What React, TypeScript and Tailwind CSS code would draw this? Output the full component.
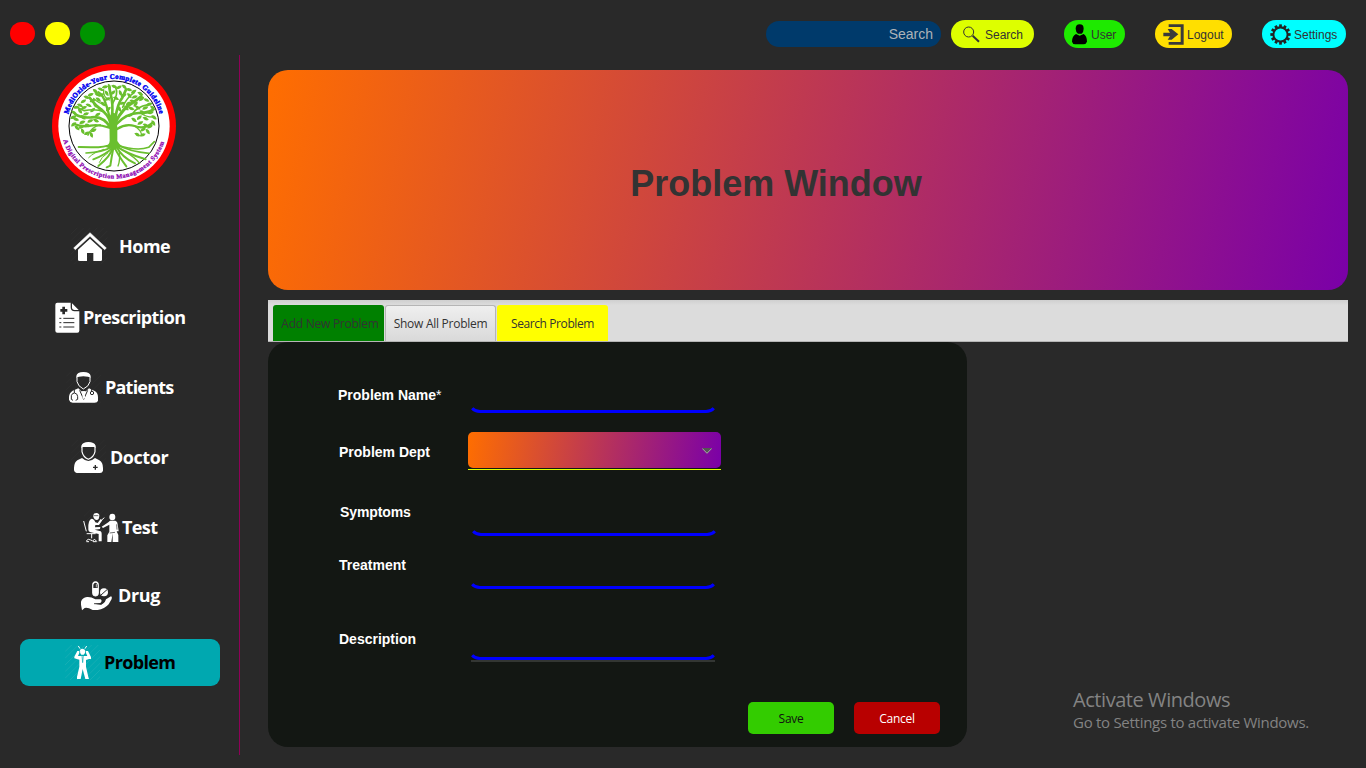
import React from "react";

const HATCH = "M0 20L20 0M0 40L40 0M0 60L60 0M0 80L80 0M0 100L100 0M10 110L110 10M30 110L110 30M50 110L110 50M70 110L110 70M90 110L110 90";

function Hatch({ x, y, color }: { x: number; y: number; color: string }) {
  return <path d={HATCH} transform={`translate(${x} ${y})`} stroke={color} strokeWidth="2" fill="none" />;
}

function HomeIcon() {
  return (
    <svg width="40" height="40" viewBox="90 18 120 120" className="shrink-0">
      <Hatch x={92} y={20} color="#323232" />
      <path d="M150 35L101 81L106 86L150 46L194 86L199 81Z" fill="#fff" stroke="#fff" strokeWidth="1.5" />
      <path d="M150 53L114 86V116Q114 120 119 120H141V96H160V120H182Q186 120 186 116V86Z" fill="#fff" />
    </svg>
  );
}

function PrescriptionIcon() {
  return (
    <svg width="25" height="31" viewBox="44 244 75 93" className="shrink-0">
      <path d="M51 246H91V260Q91 272 103 272H117V330Q117 336 111 336H51Q45 336 45 330V252Q45 246 51 246Z" fill="#fff" />
      <path d="M95 248L115 268H103Q95 268 95 260Z" fill="#fff" />
      <path d="M66 258H74V265H81V273H74V281H66V273H60V265H66Z" fill="#292929" />
      <path d="M57 293H63M69 293H102M57 306H63M69 306H102M57 319H63M69 319H102" stroke="#292929" strokeWidth="3" />
    </svg>
  );
}

function PatientsIcon() {
  return (
    <svg width="35" height="35" viewBox="78 450 105 105" className="shrink-0">
      <Hatch x={78} y={450} color="#303030" />
      <path d="M109 474V468Q111 456 130 456Q150 456 152 468V474Q147 469 130 469Q114 469 109 474Z" fill="#fff" />
      <path d="M111 472V485Q114 499 130 507Q147 499 150 485V472" fill="none" stroke="#fff" strokeWidth="3" />
      <path d="M115 505L124 514H138L147 505L164 513Q174 518 174 532V542Q172 548 164 548H98Q89 547 87 539V530Q88 518 98 512Z" fill="#fff" />
      <path d="M119 511L131 538L143 511" fill="none" stroke="#292929" strokeWidth="3" />
      <path d="M126 514H136L133 522L136 532L131 538L127 532L129 522Z" fill="#fff" />
      <path d="M103 510V519M94 538V527Q96 519 104 519Q113 521 113 530V538L107 541M94 538L99 541M155 507V516" fill="none" stroke="#292929" strokeWidth="3" />
      <circle cx="156" cy="519" r="5" fill="none" stroke="#292929" strokeWidth="3" />
    </svg>
  );
}

function DoctorIcon() {
  return (
    <svg width="35" height="35" viewBox="93 30 105 105" className="shrink-0">
      <Hatch x={93} y={30} color="#303030" />
      <path d="M124 54V47Q128 36 145 36Q163 36 167 47V54L163 51H128Z" fill="#fff" />
      <path d="M126 50V65Q129 81 145 88Q162 81 165 65V50" fill="none" stroke="#fff" strokeWidth="3.5" />
      <path d="M126 84Q145 102 165 84L178 91Q189 98 189 114V122Q187 129 180 129H110Q103 128 102 121V113Q103 97 112 91Z" fill="#fff" />
      <path d="M166 105V119M159 112H173" stroke="#292929" strokeWidth="4" />
    </svg>
  );
}

function TestIcon() {
  return (
    <svg width="36" height="35" viewBox="128 240 108 105" className="shrink-0">
      <Hatch x={130} y={240} color="#303030" />
      <path d="M159 255Q160 249 168 249Q178 250 177 258L175 267Q170 272 163 268L159 261Z" fill="#fff" />
      <path d="M160 257H174" stroke="#292929" strokeWidth="2" />
      <path d="M154 266Q161 266 165 277L172 279L181 267L186 271L176 285L165 285L164 292L180 291L179 297L163 299L181 304Q184 306 184 311V334H175V312L151 307Q143 305 144 295Q143 270 154 266Z" fill="#fff" />
      <path d="M183 271L192 263M130 273L138 304M139 311H166M154 312V325M138 332Q144 325 151 330Q157 336 163 328L169 334M138 335H146M158 335H169" fill="none" stroke="#fff" strokeWidth="3" />
      <ellipse cx="216" cy="261" rx="9" ry="10" fill="#fff" />
      <path d="M209 272H225Q232 274 232 283L235 304H229L234 315V336H217V310L213 336H201V316L207 305V284L188 294L184 290L204 277Z" fill="#fff" />
      <path d="M229 283L230 299M208 309L224 307" stroke="#292929" strokeWidth="2" />
    </svg>
  );
}

function DrugIcon() {
  return (
    <svg width="33" height="32" viewBox="120 449 99 96" className="shrink-0">
      <rect x="158" y="454" width="17" height="43" rx="8" fill="#fff" stroke="#fff" strokeWidth="3" />
      <path d="M160 463Q162 457 167 457Q172 458 173 464V473H160Z" fill="#292929" />
      <path d="M169 461V471" stroke="#fff" strokeWidth="2" />
      <circle cx="192" cy="486" r="12" fill="#fff" />
      <path d="M183 494L201 478" stroke="#292929" strokeWidth="3" />
      <path d="M123 523V514Q127 502 141 500Q153 499 166 507H182Q188 512 181 518L163 520L183 523Q194 520 198 507L213 498Q217 498 215 506L206 522Q194 536 173 539H158Q142 530 134 533L126 540Z" fill="#fff" />
      <path d="M162 520L184 521L195 512" fill="none" stroke="#292929" strokeWidth="2.5" />
    </svg>
  );
}

function ProblemIcon() {
  return (
    <svg width="35" height="35" viewBox="195 75 105 105" className="shrink-0">
      <Hatch x={195} y={75} color="#1fb0b6" />
      <path d="M235 78L240 86M260 78L255 86" stroke="#fff" strokeWidth="3" />
      <path d="M240 90Q243 86 248 86Q255 87 256 93Q256 102 251 104H244Q239 101 240 90Z" fill="#fff" />
      <path d="M232 93H238V99L234 108H262L258 99V93H264L273 111V117H267L258 120V140L265 171L267 177H256L248 147L242 177H231V171L238 140V119L223 115V110Z" fill="#fff" />
      <path d="M246 108L248 128L250 108" fill="none" stroke="#00a8b0" strokeWidth="2" />
    </svg>
  );
}

const BRANCHES: [string, number][] = [
  ["M212 215Q210 188 190 170Q165 152 148 128", 8],
  ["M212 205Q203 165 196 145Q188 120 174 112", 7],
  ["M215 185Q219 145 211 118L207 99", 8],
  ["M225 190Q232 145 246 128L257 104", 8],
  ["M226 200Q248 158 283 139L303 124", 9],
  ["M227 208Q260 174 295 174Q322 174 337 165", 8],
  ["M212 220Q190 181 153 187Q125 190 105 178", 8],
  ["M207 218Q174 207 151 212Q126 217 101 207", 7],
  ["M230 222Q256 205 283 213Q312 225 338 202", 7],
  ["M192 171Q166 160 132 167L110 157", 5],
  ["M198 150Q173 145 160 130", 4],
  ["M217 145Q235 116 226 98", 5],
  ["M247 157Q258 128 282 113", 5],
  ["M278 175Q289 156 323 149", 5],
  ["M180 209Q150 218 143 241", 4],
  ["M282 213Q302 225 304 240", 4],
  ["M207 135Q187 126 190 104", 4],
  ["M300 174Q318 187 339 186", 4],
];

const LEAVES: [number, number, number][] = [
  [181, 103, 20], [194, 96, -15], [207, 95, 65], [222, 95, 15], [236, 97, -35], [252, 96, 40], [266, 104, 10], [280, 110, -35],
  [165, 109, 40], [151, 119, -25], [139, 127, 15], [129, 139, -35], [119, 151, 20], [108, 157, -10], [101, 173, 30], [99, 187, -25],
  [107, 193, 15], [100, 208, -40], [110, 219, 40], [124, 216, -25], [127, 229, 60], [140, 235, -30], [153, 239, 65], [160, 226, -30],
  [142, 211, 25], [126, 202, -25], [128, 187, 40], [137, 177, -20], [119, 168, 50], [131, 158, -25], [145, 151, 20], [157, 165, -45],
  [164, 150, 55], [157, 137, -25], [174, 134, 35], [183, 120, -30], [172, 119, 15], [199, 115, 55], [202, 132, -25], [188, 147, 40],
  [218, 113, -45], [227, 130, 20], [240, 114, 65], [250, 121, -30], [267, 122, 45], [283, 126, -20], [300, 116, 25], [304, 132, -40],
  [318, 135, 20], [327, 148, -25], [337, 159, 40], [331, 173, -15], [341, 187, 35], [339, 204, 55], [329, 215, -35], [316, 211, 25],
  [308, 224, -35], [322, 230, 50], [307, 240, -20], [291, 239, 25], [300, 204, -30], [316, 191, 20], [297, 188, -45], [306, 172, 35],
  [315, 159, -25], [292, 158, 30], [286, 148, -55], [277, 139, 20], [264, 146, -40], [258, 159, 45], [246, 145, -15], [237, 162, 60],
  [204, 162, -45], [181, 163, 20], [172, 179, -35], [167, 197, 20], [150, 198, -25], [273, 161, 15], [281, 195, 35], [269, 181, -20],
];

const ROOTS: [string, number][] = [
  ["M215 268Q190 278 151 277L115 276", 6],
  ["M218 274Q187 293 137 294", 5],
  ["M218 277Q196 299 159 313", 6],
  ["M218 277Q211 304 174 333", 6],
  ["M219 279Q214 304 210 332L199 337", 6],
  ["M223 278Q235 304 258 334", 6],
  ["M227 273Q245 308 284 325", 6],
  ["M226 272Q260 297 316 313", 6],
  ["M227 268Q270 291 326 295", 5],
  ["M230 270Q290 290 325 277L342 260", 5],
  ["M190 283Q160 292 145 308", 3],
  ["M202 294Q182 306 177 322", 3],
  ["M237 290Q240 316 233 333", 4],
  ["M255 290Q283 307 298 325", 4],
];

function Logo() {
  return (
    <svg width="124" height="124" viewBox="35 27 372 372">
      <defs>
        <path id="arc-top" d="M84 178A141.4 141.4 0 0 1 358 178" />
        <path id="arc-bottom" d="M69 256A158 158 0 0 0 373 256" />
      </defs>
      <circle cx="221" cy="213" r="186" fill="#f00" />
      <circle cx="221" cy="213" r="167" fill="#fff" />
      <circle cx="221" cy="213" r="135" fill="none" stroke="#000" strokeWidth="3" />
      <g stroke="#6abf2e" fill="none" strokeLinecap="round" strokeLinejoin="round">
        {BRANCHES.map(([d, w], i) => <path key={i} d={d} strokeWidth={w} />)}
        {ROOTS.map(([d, w], i) => <path key={i} d={d} strokeWidth={w} />)}
      </g>
      <path d="M207 185Q214 172 220 173Q229 176 233 190Q229 205 231 225V258Q237 268 244 273L221 285L196 276Q207 269 208 257Z" fill="#6abf2e" />
      {LEAVES.map(([x, y, a], i) => (
        <path key={i} d="M-10 0Q-2 -10 10 0Q2 9 -10 0Z" fill="#6abf2e" transform={`translate(${x} ${y}) rotate(${a})`} />
      ))}
      <text fill="#0000f0" fontSize="21" fontWeight="700" fontFamily="Liberation Serif, serif" stroke="#0000f0" strokeWidth="1.4">
        <textPath href="#arc-top" textLength="372" lengthAdjust="spacing">MediOxide-Your Complete Guideline</textPath>
      </text>
      <text fill="#8c00b0" fontSize="19" fontWeight="700" fontFamily="Liberation Serif, serif" stroke="#8c00b0" strokeWidth="0.8">
        <textPath href="#arc-bottom" textLength="402" lengthAdjust="spacing">A Digital Prescription Management System</textPath>
      </text>
    </svg>
  );
}

function SearchIcon() {
  return (
    <svg width="18" height="17" viewBox="638 62 54 51" fill="none" stroke="#333">
      <circle cx="655" cy="80" r="15" strokeWidth="3" />
      <path d="M667 91L686 109" strokeWidth="6" />
    </svg>
  );
}

function UserIcon() {
  return (
    <svg width="16" height="21" viewBox="66 56 48 63" fill="#000">
      <path d="M77 70Q77 57 89 57Q101 57 101 70Q101 79 95 85H84Q77 79 77 70Z" />
      <path d="M78 86L89 91L101 86Q111 93 111 109Q108 117 100 117H76Q68 117 66 109Q66 92 78 86Z" />
    </svg>
  );
}

function LogoutIcon() {
  return (
    <svg width="21" height="21" viewBox="338 56 63 63">
      <path d="M355 57H400V118H355V110H391V65H355Z" fill="#3a3a3a" />
      <path d="M339 82H359L352 71H364L384 87L364 103H352L359 93H339Z" fill="#3a3a3a" />
    </svg>
  );
}

function SettingsIcon() {
  const teeth = Array.from({ length: 12 }, (_, i) => i * 30);
  return (
    <svg width="21" height="21" viewBox="-31 -31 62 62" fill="#222">
      <circle r="21" fill="none" stroke="#222" strokeWidth="6" />
      {teeth.map((a) => <rect key={a} x="-4" y="-30" width="8" height="8" transform={`rotate(${a})`} />)}
    </svg>
  );
}

function Underline() {
  return (
    <svg width="244" height="6" viewBox="0 0 244 6" fill="none" stroke="#00f" strokeWidth="3" className="shrink-0">
      <path d="M1.2 1.3Q4 4.5 9 4.5H235Q240 4.5 242.8 1.3" />
    </svg>
  );
}

const NAV = [
  { name: "Home", icon: <HomeIcon />, cls: "pl-[50px] gap-[9px]", text: "tracking-[-0.5px]" },
  { name: "Prescription", icon: <PrescriptionIcon />, cls: "mt-6 pl-[35px] gap-[3px]", text: "tracking-[-0.6px]" },
  { name: "Patients", icon: <PatientsIcon />, cls: "mt-[23px] pl-[46px] gap-1", text: "tracking-[-0.78px]" },
  { name: "Doctor", icon: <DoctorIcon />, cls: "mt-[23px] pl-[51px] gap-1", text: "tracking-[-0.45px]" },
  { name: "Test", icon: <TestIcon />, cls: "mt-[23px] pl-[63px] gap-[3px]", text: "tracking-[-0.6px]" },
  { name: "Drug", icon: <DrugIcon />, cls: "mt-[21px] pl-[60px] gap-[5px]", text: "tracking-[-0.4px]" },
  { name: "Problem", icon: <ProblemIcon />, cls: "mt-5 pl-[45px] gap-1 bg-[#00a8b0] text-black", text: "tracking-[-0.65px]" },
];

function Sidebar() {
  return (
    <aside className="flex h-full w-[240px] shrink-0 flex-col">
      <div className="flex h-[55px] shrink-0 gap-2.5 pl-2.5 pt-[22px]">
        <span className="h-[23px] w-[25px] rounded-full bg-[#ff0000]" />
        <span className="h-[23px] w-[25px] rounded-full bg-[#ffff00]" />
        <span className="h-[23px] w-[25px] rounded-full bg-[#009400]" />
      </div>
      <div className="flex h-[700px] flex-col border-r border-[#8f0058] pt-[9px]">
        <div className="pl-[51.5px]"><Logo /></div>
        <nav className="mt-[35px] flex flex-col pl-5 font-['Open_Sans',sans-serif] text-[18px] font-bold text-white">
          {NAV.map((n) => (
            <button key={n.name} className={`flex h-[47px] w-[200px] items-center rounded-[9px] text-left ${n.cls}`}>
              {n.icon}
              <span className={`whitespace-nowrap ${n.text}`}>{n.name}</span>
            </button>
          ))}
        </nav>
      </div>
    </aside>
  );
}

function TopBar() {
  return (
    <header className="flex h-[70px] shrink-0 items-start pl-[498px] pt-5 text-[12px] text-[#333]">
      <div className="mt-px flex h-[26px] w-[175px] items-center justify-end rounded-full bg-[#003a6b] pr-2 text-[14px] text-[#adb3b8]">Search</div>
      <button className="ml-2.5 flex h-7 w-[83px] items-center gap-1 rounded-full bg-[#ddff00] pl-3"><SearchIcon /><span className="pt-0.5">Search</span></button>
      <button className="ml-[30px] flex h-7 w-[61px] items-center gap-[3px] rounded-full bg-[#1eea00] pl-2"><UserIcon /><span className="pt-0.5">User</span></button>
      <button className="ml-[30px] flex h-7 w-[77px] items-center gap-[3px] rounded-full bg-[#ffdf00] pl-2"><LogoutIcon /><span className="pt-0.5">Logout</span></button>
      <button className="ml-[30px] flex h-7 w-[84px] items-center gap-[3px] rounded-full bg-[#00ffff] pl-2"><SettingsIcon /><span className="pt-0.5">Settings</span></button>
    </header>
  );
}

function ProblemForm() {
  return (
    <section className="h-[405px] w-[699px] rounded-[20px] bg-[#131713] pl-[70px] pt-[35px] text-[14px] font-bold text-white">
      <div className="flex h-9 items-center">
        <label className="w-[133px]">Problem Name<span className="font-normal">*</span></label>
        <div className="flex h-full items-end"><Underline /></div>
      </div>
      <div className="mt-[19px] flex h-[38px] items-center">
        <label className="w-[130px] pl-px pt-0.5">Problem Dept</label>
        <div className="h-[38px] w-[253px] border-b border-[#e0ff00]">
          <div className="flex h-9 items-center justify-end rounded-[5px] bg-[linear-gradient(98deg,#ff6e00,#7a00a8)] pr-[9px] pt-0.5">
            <svg width="10" height="6" viewBox="0 0 10 6"><path d="M0 0H10L5 5.5Z" fill="#555" /><path d="M0.3 0.5L5 5.3L9.7 0.5" stroke="#aaa" fill="none" /></svg>
          </div>
        </div>
      </div>
      <div className="mt-[18px] flex h-12 items-center">
        <label className="w-[134px] pl-0.5 tracking-[-0.1px]">Symptoms</label>
        <div className="flex h-full items-end"><Underline /></div>
      </div>
      <div className="mt-[5px] flex h-12 items-center">
        <label className="w-[133px] pl-px">Treatment</label>
        <div className="flex h-full items-end"><Underline /></div>
      </div>
      <div className="mt-[29px] flex h-11 items-center">
        <label className="w-[133px] pb-0.5 pl-px">Description</label>
        <div className="flex h-full items-end border-b-2 border-[#333633]"><Underline /></div>
      </div>
      <div className="ml-[410px] mt-10 flex gap-5 font-['Open_Sans',sans-serif] text-[12px] font-normal">
        <button className="h-8 w-[86px] rounded-[5px] bg-[#33cc00] pt-0.5 tracking-[-0.3px] text-[#111]">Save</button>
        <button className="h-8 w-[86px] rounded-[5px] bg-[#b80000] pt-0.5 tracking-[-0.3px] text-white">Cancel</button>
      </div>
    </section>
  );
}

export default function App() {
  return (
    <div className="flex h-[768px] w-[1366px] overflow-hidden bg-[#292929] font-['Liberation_Sans',Arial,sans-serif]">
      <Sidebar />
      <main className="flex min-w-0 flex-1 flex-col pl-7">
        <TopBar />
        <div className="flex h-[220px] w-[1080px] shrink-0 items-center justify-center rounded-[20px] bg-[linear-gradient(101.5deg,#ff6e00,#7a00a8)]">
          <h1 className="pr-16 pt-[7px] text-[36px] font-bold text-[#333]">Problem Window</h1>
        </div>
        <div className="mt-2.5 flex h-[42px] w-[1080px] shrink-0 gap-px border-b border-[#b5b5b5] bg-[linear-gradient(#cfcfcf,#dcdcdc_5px)] pl-[5px] pt-[5px] font-['Open_Sans',sans-serif] text-[12px] text-[#333]">
          <button className="w-[111px] whitespace-nowrap rounded-t-[3px] bg-[#008000] pl-[3px] pt-0.5 tracking-[-0.25px]">Add New Problem</button>
          <button className="w-[111px] whitespace-nowrap rounded-t-[3px] border border-b-0 border-[#b5b5b5] bg-[linear-gradient(#efefef,#d9d9d9)] pt-px tracking-[-0.27px]">Show All Problem</button>
          <button className="w-[111px] whitespace-nowrap rounded-t-[3px] bg-[#ffff00] pt-0.5 tracking-[-0.4px]">Search Problem</button>
        </div>
        <div className="flex">
          <ProblemForm />
          <div className="ml-[106px] mt-[345px] whitespace-nowrap font-['Open_Sans',sans-serif] text-[#838383]">
            <p className="text-[20px] leading-[26px] tracking-[-0.44px]">Activate Windows</p>
            <p className="text-[15px] leading-[18px] tracking-[-0.28px]">Go to Settings to activate Windows.</p>
          </div>
        </div>
      </main>
    </div>
  );
}
